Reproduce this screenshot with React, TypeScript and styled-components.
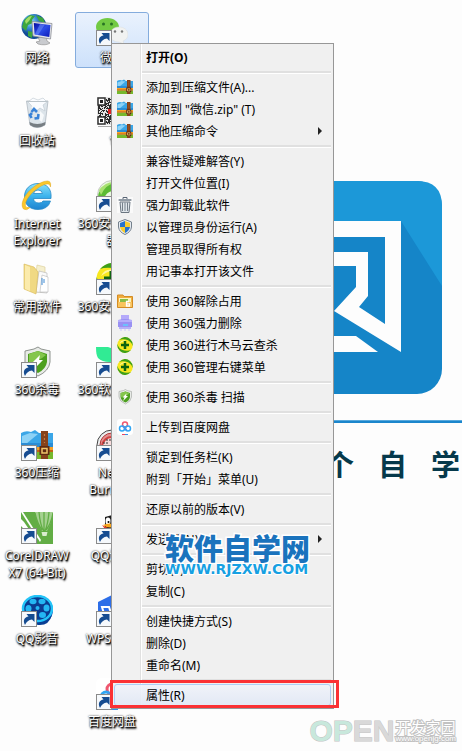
import React from "react";
import styled, { createGlobalStyle, css } from "styled-components";

const GlobalStyle = createGlobalStyle`
  * { box-sizing: border-box; }
  body {
    margin: 0;
    background: #fdfdfd;
    font-family: "Noto Sans", "Noto Sans CJK SC", sans-serif;
    font-size: 12px;
  }
  svg { display: block; flex: none; }
  button { font: inherit; color: inherit; }
`;

const Desktop = styled.main`
  position: relative;
  min-height: 100vh;
  padding-top: 12px;
  overflow: hidden;
  background: #fdfdfd;
`;

/* ---------- wallpaper ---------- */

const Wallpaper = styled.div`
  position: absolute;
  top: 181px;
  left: 229px;
  right: 0;
  display: flex;
  flex-direction: column;
`;

const Rule = styled.div`
  height: 3px;
  margin-top: 26px;
  background: #1b86cc;
  border-top: 1px solid #58a9dd;
`;

const Slogan = styled.div`
  display: flex;
  gap: 24px;
  margin-top: 19px;
  padding-left: 96px;
  font-family: "Noto Sans CJK SC", sans-serif;
  font-size: 29px;
  font-weight: 700;
  line-height: 42px;
  color: #06394b;
`;

/* ---------- desktop icons ---------- */

const IconGrid = styled.div`
  display: grid;
  grid-template-columns: 75px 75px;
  grid-template-rows: repeat(8, 83px) auto;
  align-items: start;
`;

const Shortcut = styled.button<{ $column: number; $selected?: boolean }>`
  grid-column: ${(p) => p.$column};
  display: flex;
  flex-direction: column;
  align-items: center;
  gap: 3px;
  width: 74px;
  padding: 1px 0;
  border: 1px solid transparent;
  border-radius: 3px;
  background: transparent;
  ${(p) =>
    p.$selected &&
    css`
      border-color: #84acdd;
      background: linear-gradient(#eaf2fd, #cde1fb);
    `}
`;

const Picture = styled.span`
  position: relative;
  width: 32px;
  height: 32px;
`;

const ArrowBadge = styled.span`
  position: absolute;
  left: 0;
  bottom: 0;
`;

const Label = styled.span`
  display: flex;
  flex-direction: column;
  align-items: center;
  line-height: 17px;
  white-space: nowrap;
  color: #fff;
  text-shadow: 1px 1px 1px #000, 0 0 2px #000, 1px 2px 2px #000;
`;

/* ---------- context menu ---------- */

const Menu = styled.div`
  position: absolute;
  top: 43px;
  left: 111px;
  width: 223px;
  padding: 2px;
  border: 1px solid #979797;
  background: linear-gradient(90deg, #f1f1f1 28px, #e0e0e0 28px, #e0e0e0 29px, #fff 29px, #fff 30px, #f0f0f0 30px);
  color: #000;
`;

const Row = styled.button<{ $strong?: boolean; $active?: boolean }>`
  position: relative;
  display: flex;
  align-items: center;
  width: 100%;
  height: 22px;
  padding: 0 8px 0 2px;
  border: 1px solid transparent;
  border-radius: 3px;
  background: transparent;
  text-align: left;
  white-space: nowrap;
  font-weight: ${(p) => (p.$strong ? 700 : 400)};
  ${(p) =>
    p.$active &&
    css`
      border-color: #aecff7;
      background: linear-gradient(rgba(240, 243, 250, 0.9), rgba(225, 232, 245, 0.9));
    `}
`;

const IconSlot = styled.span`
  width: 16px;
  height: 16px;
  margin-right: 13px;
  flex: none;
`;

const RowText = styled.span`
  flex: 1;
`;

const Separator = styled.div`
  height: 8px;
  padding: 3px 0;
  margin-left: 28px;
  &::before {
    content: "";
    display: block;
    height: 2px;
    background: #e0e0e0;
    border-bottom: 1px solid #fff;
  }
`;

const RedFrame = styled.span`
  position: absolute;
  top: -5px;
  bottom: -3px;
  left: -5px;
  right: -9px;
  border: 3px solid #fb3134;
  pointer-events: none;
`;

/* ---------- site marks ---------- */

const SiteMark = styled.div`
  position: absolute;
  top: 531px;
  left: 165px;
  display: flex;
  flex-direction: column;
  white-space: nowrap;
  paint-order: stroke fill;
`;

const SiteName = styled.strong`
  font-family: "Noto Sans CJK SC", sans-serif;
  font-size: 29px;
  font-weight: 900;
  line-height: 32px;
  color: #1a73bd;
  -webkit-text-stroke: 3px #fff;
`;

const SiteUrl = styled.a`
  font-family: "DejaVu Sans", sans-serif;
  font-size: 14px;
  font-weight: 700;
  line-height: 12px;
  color: #16a0e2;
  text-decoration: none;
  -webkit-text-stroke: 2px #fff;
`;

const CornerMark = styled.div`
  position: absolute;
  right: 6px;
  bottom: 7px;
  display: flex;
  align-items: center;
  gap: 1px;
  white-space: nowrap;
  paint-order: stroke fill;
`;

const OpenWord = styled.strong`
  font-family: "Liberation Sans", sans-serif;
  font-size: 30px;
  line-height: 26px;
  color: #d9d9d9;
  -webkit-text-stroke: 1px #c4c4c4;
`;

const Mint = styled.span`
  color: #c8e8dc;
`;

const CornerText = styled.div`
  display: flex;
  flex-direction: column;
  color: #fff;
  -webkit-text-stroke: 2px #c2c2c2;
`;

const CornerName = styled.span`
  font-family: "Noto Sans CJK SC", sans-serif;
  font-size: 15px;
  line-height: 16px;
`;

const CornerUrl = styled.a`
  font-family: "Liberation Sans", sans-serif;
  font-size: 8px;
  line-height: 8px;
  color: #fff;
  text-decoration: none;
`;

/* ---------- drawings ---------- */

const Svg = ({ s = 32, children }: { s?: number; children: React.ReactNode }) => (
  <svg width={s} height={s} viewBox={`0 0 ${s} ${s}`} aria-hidden="true">
    {children}
  </svg>
);

const LinkArrow = () => (
  <Svg s={16}>
    <rect x=".5" y=".5" width="15" height="15" fill="#f6f9fc" stroke="#8a8a8a" />
    <path d="M4 14C1.500 9.500 3.500 6 7.500 5.500L5.500 3H13.500V11L11 8.500C7.500 9 5.500 10.500 4 14Z" fill="#164c91" />
  </Svg>
);

const Network = () => (
  <Svg>
    <defs>
      <radialGradient id="globe" cx=".35" cy=".3">
        <stop offset="0" stopColor="#a9e4ff" /><stop offset=".5" stopColor="#3d93d8" /><stop offset="1" stopColor="#124c96" />
      </radialGradient>
      <linearGradient id="screen" x2="1" y2="1">
        <stop offset="0" stopColor="#060aa0" /><stop offset=".5" stopColor="#2c4de8" /><stop offset="1" stopColor="#0c18b4" />
      </linearGradient>
    </defs>
    <circle cx="13" cy="12.500" r="12.500" fill="url(#globe)" />
    <path d="M3 6L9 1L14 2L11 6L12 9L7 11L5 17L1 13ZM15 1L22 4L24 9L18 7ZM7 17L12 18L11 24L7 22Z" fill="#3da63e" />
    <path d="M4 7Q7 2 11 2L8 7L5 10Z" fill="#a2dd68" />
    <path d="M17 24L25 22L26 27L29 29Q25 32 17 30L15 28L19 27Z" fill="#c9cbcf" stroke="#888" strokeWidth=".6" />
    <path d="M11 7.500L31 9.500L29.500 25L12 22Z" fill="#e7e9ec" stroke="#8b8e96" strokeWidth=".8" />
    <path d="M12.800 9L29.500 11L28.300 23L13.500 20.500Z" fill="url(#screen)" />
    <path d="M19 10L24 10.500L17 21L13.800 20.400Z" fill="#6f91ff" opacity=".55" />
  </Svg>
);

const WeChat = () => (
  <Svg>
    <path d="M11.500 4C4.500 4 0 8 0 13Q0 18 5 21L4 25L9 22H14C20 21 23 17 23 13C23 8 18 4 11.500 4Z" fill="#72ca43" />
    <path d="M23 13C17 13 14 17 14 20.500C14 25 18 28 23 28L28 30L27 27Q32 25 32 20.500C32 16 28 13 23 13Z" fill="#f1f2f1" stroke="#dadcda" strokeWidth=".5" />
    <circle cx="7.500" cy="10" r="1.500" fill="#287224" /><circle cx="15.500" cy="10" r="1.500" fill="#287224" />
    <circle cx="19" cy="17.500" r="1.200" fill="#777" /><circle cx="26" cy="17.500" r="1.200" fill="#777" />
  </Svg>
);

const RecycleBin = () => (
  <Svg>
    <path d="M5.500 4H27L24 28Q16 33 9 28Z" fill="#dce4ea" stroke="#aeb8c0" strokeWidth=".8" />
    <path d="M9 28Q16 33 24 28L24.500 25Q16 29 8.500 25Z" fill="#777e83" />
    <path d="M7 5L12 1L17 3L22 1L26 5L22 8L24 14L19 11L14 15L10 8Z" fill="#fafcff" stroke="#bcc6ce" strokeWidth=".6" />
    <path d="M19 14L23 18L21 25L17 22ZM10 10L15 8L13 13Z" fill="#f6f9fb" />
    <path d="M5.500 4.500H27" stroke="#bbc4ca" fill="none" />
    <g fill="none" stroke="#3982d8" strokeWidth="2.600"><path d="M10.500 15L13 12L16 15" /><path d="M17.500 17L17 21L13.500 21.500" /><path d="M10.500 21L9 18L11 16" /></g>
  </Svg>
);

const QrCode = () => {
  const dots: string[] = [];
  for (let y = 0; y < 26; y++)
    for (let x = 0; x < 27; x++) if ((x * x * 5 + y * y * 3 + x * y * 7 + x) % 11 < 6) dots.push(`M${x + 2} ${y + 1}h1v1h-1z`);
  return (
    <Svg>
      <rect x="1" width="29" height="28" fill="#e4e4e4" />
      <path d={dots.join("")} fill="#2b2b2b" />
      <path d="M2 1H9V8H2ZM2 20H9V27H2Z" fill="#fff" stroke="#333" strokeWidth="1.500" />
      <path d="M4 3H7V6H4ZM4 22H7V25H4Z" fill="#222" />
      <rect x="12" y="12" width="8" height="5" fill="#d22" />
      <path d="M2 29.500H30" stroke="#aaa" />
    </Svg>
  );
};

const Explorer = () => (
  <Svg>
    <defs>
      <linearGradient id="ie" x2="0" y2="1"><stop offset="0" stopColor="#8ce1fa" /><stop offset=".5" stopColor="#3bb2ec" /><stop offset="1" stopColor="#1f84d0" /></linearGradient>
    </defs>
    <path d="M30 18.500H12.500Q13 23 18 23Q21 23 22 21H29.500Q27 29.500 17 29.500C8 29.500 3.500 24 3.500 16.500C3.500 9 9 3.500 17 3.500C26 3.500 31 9 30 18.500ZM12.500 13.500H21.500Q21 10 17 10Q13.200 10 12.500 13.500Z" fill="url(#ie)" stroke="#2689c6" strokeWidth=".8" />
    <path d="M2.500 29C-3 22 9 6 23 1.500Q31-1 29.500 7Q29 2.500 23.500 4.500C14 8 3 20 4.500 26Q5 28 9 27.500Q5.500 31 2.500 29Z" fill="#fbc72b" stroke="#d89a0d" strokeWidth=".4" />
  </Svg>
);

const Folder = () => (
  <Svg>
    <path d="M16 2L24 4V29H13Z" fill="#f5efce" stroke="#d8cb91" strokeWidth=".6" />
    <path d="M18 8L26 10V30L15 29Z" fill="#fafafa" stroke="#bbb" strokeWidth=".7" />
    <path d="M21 12L27 14V29H19Z" fill="#fff" stroke="#aaa" strokeWidth=".5" />
    <path d="M3 1L13 4L17 9L15 31L3 26Z" fill="#f0d983" stroke="#d8b957" strokeWidth=".6" />
    <path d="M4 2L9 4V28L4 26Z" fill="#fbebac" />
    <path d="M21 15V22M23 16V20" stroke="#3f8ad2" />
  </Svg>
);

const GreenE = () => (
  <Svg>
    <circle cx="16" cy="15" r="14.500" fill="#e9f6df" stroke="#aaa" strokeWidth=".6" />
    <path d="M2 18A14 14 0 0130 18L24 20Q23 11 16 11Q10 12 8 19Z" fill="#5cbb35" />
    <path d="M3 10Q10 1 20 2Q9 5 5 15Z" fill="#a8e171" />
  </Svg>
);

const PlusBall = ({ s = 32 }: { s?: number }) => (
  <svg width={s} height={s} viewBox="0 0 32 32" aria-hidden="true">
    <circle cx="16" cy="16" r="15.500" fill="#f8e71e" />
    <path d="M4 6Q15-5 26 4Q32 9 31.500 18Q28 7 17 5Q9 4 4 6Z" fill="#3d9f1b" />
    <path d="M28 26Q17 37 6 28Q0 23 .5 14Q4 25 15 27Q23 28 28 26Z" fill="#3d9f1b" />
    <path d="M5 13Q9 5 18 7Q10 9 5 13Z" fill="#fff799" />
    <path d="M13.500 8H18.500V13.500H24V18.500H18.500V24H13.500V18.500H8V13.500H13.500Z" fill="#0f6410" />
  </svg>
);

const GreenShield = ({ s = 32 }: { s?: number }) => (
  <svg width={s} height={s} viewBox="0 0 32 32" aria-hidden="true">
    <path d="M17 1L20 3L29 5V16Q28 25 17 30Q5 25 4 16V5L13 3Z" fill="#e8ebe7" stroke="#8e938e" />
    <path d="M17 5L26 8V16Q25 23 17 27Q8 23 7 16V8Z" fill="#4c9f1e" />
    <path d="M17 5L8 8V17Q17 16 25 9Z" fill="#84c64c" />
    <path d="M19 9L11 17H15L12 24L22 14H18Z" fill="#fff" />
  </svg>
);

const SoftManager = () => (
  <Svg>
    <path d="M0 1H12Q20 2 22 15Q8 18 2 12Q0 9 0 1Z" fill="#31eb94" />
    <path d="M18 2H31V14H22Z" fill="#1dbd78" />
    <path d="M0 17H31V31H0Z" fill="#fbe4a7" />
  </Svg>
);

const ZipBooks = ({ s = 32 }: { s?: number }) => (
  <svg width={s} height={s} viewBox="0 0 32 32" aria-hidden="true">
    <path d="M0 4Q5 1 10 3L14 1L18 4H32V16H0Z" fill="#3ba6e7" />
    <path d="M1 7L9 4L17 5L5 15H1Z" fill="#8dd2f6" />
    <path d="M0 14H32V20H0Z" fill="#2b8dd5" />
    <path d="M0 18H32V23H0Z" fill="#f7a128" />
    <path d="M0 23H32V30H0Z" fill="#76b82d" />
    <path d="M0 22H32" stroke="#c36312" strokeWidth="2" />
    <path d="M20 2H27V30H20Z" fill="#86421a" />
    <path d="M18.500 17H28.500V26H18.500Z" fill="#5f2a10" />
    <path d="M21 19.500H26V24H21Z" fill="none" stroke="#f0c36a" strokeWidth="1.500" />
    <path d="M23.500 5V14" stroke="#bf7942" strokeWidth="1.200" strokeDasharray="2 2" />
  </svg>
);

const Burner = () => (
  <Svg>
    <circle cx="16" cy="16" r="15" fill="#eceeef" stroke="#444" />
    <circle cx="16" cy="16" r="12" fill="#e38f8f" stroke="#b13737" />
    <path d="M6 17Q8 8 16 8Q24 8 26 17" fill="#f7dada" stroke="#d04040" strokeWidth="2" />
    <path d="M7 14H12M10 11H15" stroke="#333" strokeDasharray="2 1" />
  </Svg>
);

const Corel = () => (
  <Svg>
    <path d="M0 0H32V32H0Z" fill="#62ad45" />
    <path d="M0 0H2L20 28L19 30Z" fill="#fff" />
    <path d="M0 7L3 10L16 29L14 29L0 14Z" fill="#fff" />
    <path d="M14 0H32Q31 10 26 19H21Q15 10 14 0Z" fill="#a5d190" />
    <path d="M18 0Q19 12 22.500 19M23 0V19M28 0Q27 12 24 19M14 1Q16 11 21 18M32 1Q30 12 25 18" fill="none" stroke="#62ad45" strokeWidth="1.300" />
    <path d="M20.500 20H26.500L25.500 24H21.500Z" fill="#d9edcf" />
  </Svg>
);

const Penguin = () => (
  <Svg>
    <path d="M9 5L20 2L27 7L25 27H9Z" fill="#1d1d1d" />
    <ellipse cx="12" cy="9" rx="2.500" ry="3.500" fill="#fff" /><ellipse cx="18" cy="9" rx="2.500" ry="3.500" fill="#fff" />
    <circle cx="12.500" cy="10" r="1" /><circle cx="17.500" cy="10" r="1" />
    <path d="M7 13Q13 10 21 13Q14 18 7 13Z" fill="#f8a51b" />
    <path d="M6 13L12 16L26 17L24 21H12Z" fill="#e53621" />
    <path d="M13 20H23V29H13Z" fill="#fff" />
  </Svg>
);

const Reel = () => (
  <Svg>
    <ellipse cx="17" cy="15" rx="15" ry="14.500" fill="#0a58bb" />
    <path d="M8 25Q18 32 31 20Q28 31 17 30Z" fill="#093e92" />
    <ellipse cx="16.500" cy="13.500" rx="14.500" ry="12.500" fill="#0b3c91" stroke="#24c4f8" strokeWidth="2.500" />
    <g fill="#24b6f3"><ellipse cx="12" cy="6.500" rx="3.500" ry="2.800" /><ellipse cx="21" cy="6.500" rx="3.500" ry="2.800" /><ellipse cx="7.500" cy="13.500" rx="3" ry="3.500" /><ellipse cx="25.500" cy="13" rx="3" ry="3.500" /><ellipse cx="21.500" cy="20" rx="3.500" ry="3" /><ellipse cx="12" cy="20" rx="3.500" ry="3" /><circle cx="16.500" cy="13" r="2" /></g>
  </Svg>
);

const Wps = () => (
  <Svg>
    <path d="M2 7L16 0L30 7V24L16 31L2 24Z" fill="#2d6ee8" />
    <path d="M6 12H13L16 21L19 12H26L20 25H17L15 18L12 25H10Z" fill="none" stroke="#fff" strokeWidth="2" />
  </Svg>
);

const NetDisk = ({ s = 32 }: { s?: number }) => (
  <svg width={s} height={s} viewBox="0 0 32 32" aria-hidden="true">
    <rect width="32" height="32" rx="6" fill="#fff" />
    <g fill="none" strokeWidth="3"><circle cx="16" cy="11" r="5" stroke="#ef5870" /><circle cx="10" cy="19" r="5" stroke="#31a6f3" /><circle cx="22" cy="19" r="5" stroke="#31a6f3" /></g>
    <path d="M12 15L20 23" stroke="#4a8fe9" strokeWidth="3" />
    <path d="M10 31H16" stroke="#ef4561" strokeWidth="2" /><path d="M16 31H22" stroke="#3491e9" strokeWidth="2" />
  </svg>
);

const Trash = () => (
  <Svg s={16}>
    <path d="M0 0H16V16H0Z" fill="#fafafa" />
    <path d="M6 2V.5H10V2M1.500 3H14.500" fill="none" stroke="#596575" />
    <path d="M2 2H14V4H2Z" fill="#919ba5" />
    <path d="M3 5H13L12 15.500H4Z" fill="#dfe5ea" stroke="#6a7580" />
    <path d="M5.500 5.500V14M8 5.500V14M10.500 5.500V14" stroke="#75808b" />
  </Svg>
);

const AdminShield = () => (
  <Svg s={16}>
    <path d="M8 .5L14.500 3V8Q14 13 8 15.500Q2 13 1.500 8V3Z" fill="#e5eaf0" stroke="#74808c" />
    <path d="M8 2L3 4V8H8Z" fill="#2573cd" /><path d="M8 2L13 4V8H8Z" fill="#f8cc2d" />
    <path d="M3 8H8V14Q4 12 3 8Z" fill="#f8cc2d" /><path d="M13 8H8V14Q12 12 13 8Z" fill="#2573cd" />
  </Svg>
);

const OrangeFolder = () => (
  <Svg s={16}>
    <path d="M.5 2H6L7 3.500H15.500V14.500H.5Z" fill="#f2ad3c" stroke="#d38c25" />
    <path d="M2 5H14V9H2Z" fill="#fbf4be" /><path d="M3 6H11V9H3Z" fill="#87bc45" />
    <path d="M1 9H15V14H1Z" fill="#f9c45d" />
    <path d="M12 8.500H9.500V13H12.500V10.800H9.500" fill="none" stroke="#fff" strokeWidth="1.300" />
  </Svg>
);

const Shredder = () => (
  <Svg s={16}>
    <path d="M4 0H12V6H4Z" fill="#b4a9fa" /><path d="M1 5Q8 3 15 5V12H1Z" fill="#9a91f3" />
    <path d="M1 5H15V7H1Z" fill="#b5aefb" /><path d="M2 12H14V14H2Z" fill="#b6b1f8" />
    <path d="M6 9H11V11H6Z" fill="#6bc1fb" /><path d="M4 14V16M8 14V16M12 14V16" stroke="#cbc6fb" />
  </Svg>
);

const SubmenuArrow = () => (
  <svg width="4" height="8" viewBox="0 0 4 8" aria-hidden="true"><path d="M0 0V8L4 4Z" fill="#222" /></svg>
);

/* ---------- data ---------- */

type DesktopItem = { lines: string[]; icon: React.ReactNode; column: number; link?: boolean; selected?: boolean };

const desktopItems: DesktopItem[] = [
  { lines: ["网络"], icon: <Network />, column: 1 },
  { lines: ["微信"], icon: <WeChat />, column: 2, link: true, selected: true },
  { lines: ["回收站"], icon: <RecycleBin />, column: 1 },
  { lines: ["1"], icon: <QrCode />, column: 2 },
  { lines: ["Internet", "Explorer"], icon: <Explorer />, column: 1 },
  { lines: ["360安全浏览", "器"], icon: <GreenE />, column: 2, link: true },
  { lines: ["常用软件"], icon: <Folder />, column: 1 },
  { lines: ["360安全卫士"], icon: <PlusBall />, column: 2, link: true },
  { lines: ["360杀毒"], icon: <GreenShield />, column: 1, link: true },
  { lines: ["360软件管家"], icon: <SoftManager />, column: 2, link: true },
  { lines: ["360压缩"], icon: <ZipBooks />, column: 1, link: true },
  { lines: ["Nero", "Burning"], icon: <Burner />, column: 2, link: true },
  { lines: ["CorelDRAW", "X7 (64-Bit)"], icon: <Corel />, column: 1, link: true },
  { lines: ["QQ游戏"], icon: <Penguin />, column: 2, link: true },
  { lines: ["QQ影音"], icon: <Reel />, column: 1, link: true },
  { lines: ["WPS 文字"], icon: <Wps />, column: 2, link: true },
  { lines: ["百度网盘"], icon: <NetDisk />, column: 2, link: true },
];

type MenuItem = { text: string; icon?: React.ReactNode; strong?: boolean; submenu?: boolean; active?: boolean };

const menuGroups: MenuItem[][] = [
  [{ text: "打开(O)", strong: true }],
  [
    { text: "添加到压缩文件(A)...", icon: <ZipBooks s={16} /> },
    { text: '添加到 "微信.zip" (T)', icon: <ZipBooks s={16} /> },
    { text: "其他压缩命令", icon: <ZipBooks s={16} />, submenu: true },
  ],
  [
    { text: "兼容性疑难解答(Y)" },
    { text: "打开文件位置(I)" },
    { text: "强力卸载此软件", icon: <Trash /> },
    { text: "以管理员身份运行(A)", icon: <AdminShield /> },
    { text: "管理员取得所有权" },
    { text: "用记事本打开该文件" },
  ],
  [
    { text: "使用 360解除占用", icon: <OrangeFolder /> },
    { text: "使用 360强力删除", icon: <Shredder /> },
    { text: "使用 360进行木马云查杀", icon: <PlusBall s={16} /> },
    { text: "使用 360管理右键菜单", icon: <PlusBall s={16} /> },
  ],
  [{ text: "使用 360杀毒 扫描", icon: <GreenShield s={16} /> }],
  [{ text: "上传到百度网盘", icon: <NetDisk s={16} /> }],
  [{ text: "锁定到任务栏(K)" }, { text: "附到「开始」菜单(U)" }],
  [{ text: "还原以前的版本(V)" }],
  [{ text: "发送到(N)", submenu: true }],
  [{ text: "剪切(T)" }, { text: "复制(C)" }],
  [{ text: "创建快捷方式(S)" }, { text: "删除(D)" }, { text: "重命名(M)" }],
  [{ text: "属性(R)", active: true }],
];

export default function App() {
  return (
    <>
      <GlobalStyle />
      <Desktop>
        <Wallpaper>
          <svg width="213" height="213" viewBox="0 0 213 213" aria-hidden="true">
            <rect width="213" height="213" rx="25" fill="#1585c8" />
            <path d="M0 40V25Q0 0 25 0H188Q213 0 213 25V105L172 40Z" fill="#1c98d8" />
            <path d="M40 40H172V171L105 130L127 106V85H60V71H139V115L130 126L156 143V56H40Z" fill="#fdfdfd" />
            <path d="M60 155H127L149 171H60Z" fill="#fdfdfd" />
          </svg>
          <Rule />
          <Slogan>
            <span>个</span>
            <span>自</span>
            <span>学</span>
          </Slogan>
        </Wallpaper>

        <IconGrid>
          {desktopItems.map((item) => (
            <Shortcut key={item.lines[0]} $column={item.column} $selected={item.selected}>
              <Picture>
                {item.icon}
                {item.link && <ArrowBadge><LinkArrow /></ArrowBadge>}
              </Picture>
              <Label>
                {item.lines.map((line) => <span key={line}>{line}</span>)}
              </Label>
            </Shortcut>
          ))}
        </IconGrid>

        <Menu role="menu">
          {menuGroups.map((group, index) => (
            <React.Fragment key={group[0].text}>
              {index > 0 && <Separator role="separator" />}
              {group.map((item) => (
                <Row key={item.text} role="menuitem" $strong={item.strong} $active={item.active}>
                  <IconSlot>{item.icon}</IconSlot>
                  <RowText>{item.text}</RowText>
                  {item.submenu && <SubmenuArrow />}
                  {item.active && <RedFrame />}
                </Row>
              ))}
            </React.Fragment>
          ))}
        </Menu>

        <SiteMark>
          <SiteName>软件自学网</SiteName>
          <SiteUrl href="#">WWW.RJZXW.COM</SiteUrl>
        </SiteMark>

        <CornerMark>
          <OpenWord><Mint>OP</Mint>EN</OpenWord>
          <CornerText>
            <CornerName>开发家园</CornerName>
            <CornerUrl href="#">www.openjg.com</CornerUrl>
          </CornerText>
        </CornerMark>
      </Desktop>
    </>
  );
}
